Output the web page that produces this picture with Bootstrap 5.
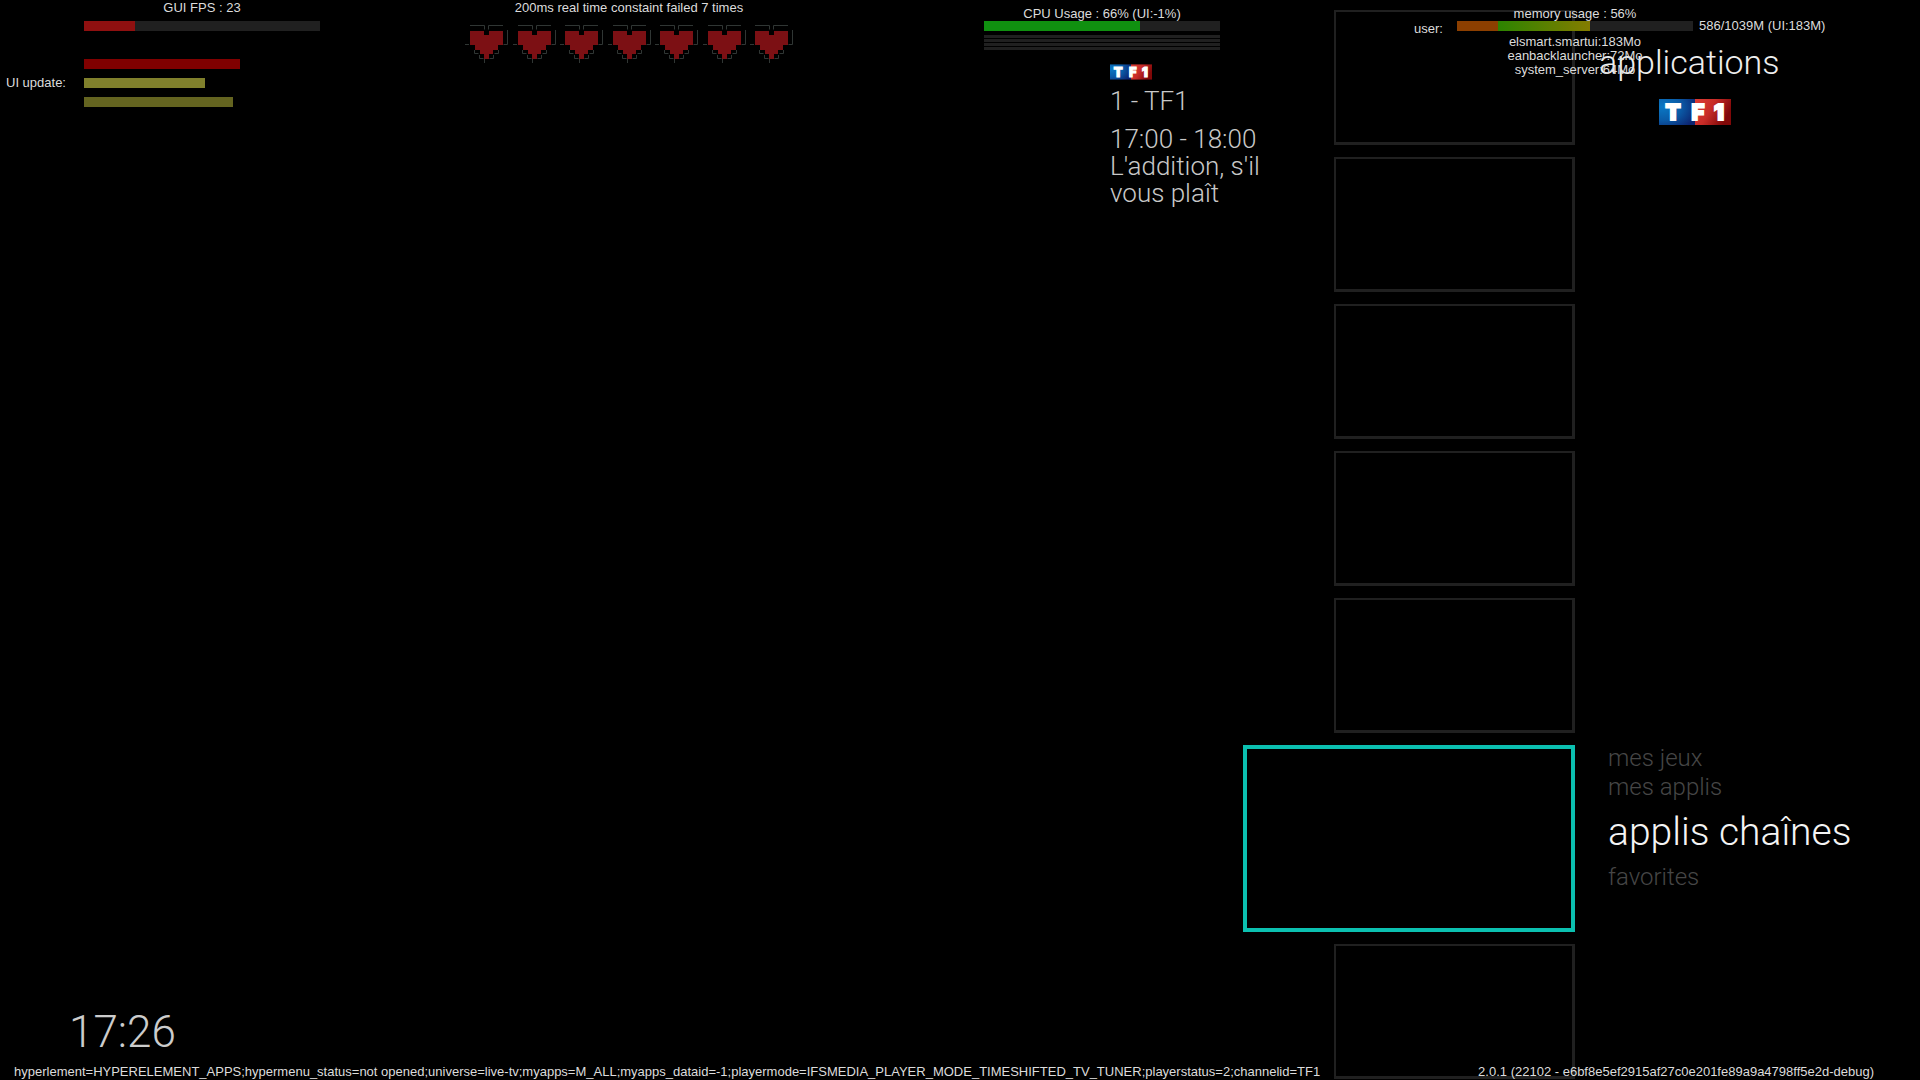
<!DOCTYPE html>
<html lang="fr">
<head>
<meta charset="utf-8">
<meta name="viewport" content="width=device-width, initial-scale=1">
<title>applications</title>
<link rel="stylesheet" href="https://cdn.jsdelivr.net/npm/bootstrap@5.3.0/dist/css/bootstrap.min.css">
<style>
  body { background: #000; color: #eee; font-family: Roboto, "Liberation Sans", sans-serif; font-weight: 300; }
  a { color: inherit; text-decoration: none; }
  .stage { display: grid; grid-template-columns: 1110fr 133px 332px 345fr; min-height: 100vh; overflow: hidden; }

  /* clock and channel */
  .clock { font-size: 44px; line-height: 48px; color: #ccc; padding: 0 0 24px 69px; }
  .channel { width: 160px; padding-top: 64px; color: #c8c8c8; font-size: 26px; line-height: 27px; }
  .channel-name { font-size: 26px; line-height: 27px; font-weight: 300; margin: 8px 0 11px; }

  /* vignettes */
  .tiles { padding: 10px 0 1px; gap: 12px; }
  .tile { width: 241px; height: 135px; border: solid #202020; border-width: 2px 3px 3px 2px; background: transparent; padding: 0; }
  .tile-on { width: 332px; height: 187px; border: 4px solid #0bc0b0; }

  /* right menu */
  .side { padding-top: 38px; }
  .side-title { font-size: 34px; line-height: 48px; font-weight: 300; margin: 0 0 13px 24px; }
  .side-logo { margin-left: 84px; }
  .side-menu { margin: 619px 0 0 33px; font-size: 24px; line-height: 29px; color: #464646; }
  .side-menu .current { font-size: 39px; line-height: 61px; color: #f4f4f4; }

  /* debug overlay */
  .hud { display: grid; grid-template-columns: 511fr 473fr 430fr 506fr; pointer-events: none; }
  .hud, .status { font-family: "Liberation Sans", sans-serif; font-weight: 400; font-size: 13px; line-height: 16px; color: #dcdcdc; }
  .hud-label { height: 21px; width: 236px; text-align: center; white-space: nowrap; }
  .hud-low { padding-top: 6px; }
  .meter { width: 236px; height: 10px; border-radius: 0; background: #202020; }
  .gauge { display: grid; grid-template-columns: 84px 236px; align-items: center; }
  .gauge-label { padding: 28px 0 0 6px; }
  .memory { display: grid; grid-template-columns: 43px 236px auto; align-content: start; }
  .memory-total { padding-left: 6px; margin-top: -3px; }
  .updates { padding-top: 28px; gap: 9px; }
  .updates div { height: 10px; }
  .c-red { background: #8f1010; }
  .c-dark { background: #800000; }
  .c-olive { background: #80802c; }
  .c-moss { background: #646420; }
  .c-green { background: #109010; }
  .c-rust { background: #8c3f00; }
  .c-mix { background: linear-gradient(90deg, #2c8400, #847c00); }
  .hearts { width: 328px; margin-left: -46px; padding-top: 4px; }
  .cores { width: 236px; gap: 1px; padding-top: 4px; }
  .cores div { height: 3px; background: #202020; }
  .procs { line-height: 14px; padding-top: 4px; text-align: center; white-space: nowrap; }
  .status { padding: 0 46px 0 14px; white-space: nowrap; pointer-events: none; }
</style>
</head>
<body>
<svg width="0" height="0" class="position-absolute" aria-hidden="true">
  <defs>
    <radialGradient id="gBlue" cx="0.1" cy="0.3" r="1"><stop offset="0" stop-color="#0a78c4"/><stop offset="0.5" stop-color="#0a5ca8"/><stop offset="1" stop-color="#0c2470"/></radialGradient>
    <linearGradient id="gRed" x1="0" y1="0" x2="1" y2="0.4"><stop offset="0" stop-color="#dc3c34"/><stop offset="0.5" stop-color="#c82c28"/><stop offset="1" stop-color="#800808"/></linearGradient>
    <symbol id="tf1" viewBox="0 0 72 26">
      <rect width="36" height="26" fill="url(#gBlue)"/><rect x="36" width="36" height="26" fill="url(#gRed)"/>
      <g fill="#fff" stroke="#fff" stroke-width="2" font-family="Inter, sans-serif" font-weight="900" font-size="22" text-anchor="middle"><text x="14" y="21">T</text><text x="39" y="21">F</text><text x="60" y="21">1</text></g>
    </symbol>
    <symbol id="heart" viewBox="0 0 43 38">
      <path fill="#7c1014" d="M5 6h14v4h5v-4h14v14h-5v5h-5v4h-4v5h-5v-5h-4v-4h-5v-5h-5z"/>
      <path fill="none" stroke="#303634" d="M5 .5h14.500v4M23.500 4.500v-4h14.500M0 19.500h4M42.500 5v14.500h-4M9.500 25v3.500h4M33.500 25v3.500h-4M14.500 30v3.500h4M28.500 30v3.500h-4M19.500 34v4"/>
    </symbol>
  </defs>
</svg>

<main class="stage">
  <time class="clock align-self-end">17:26</time>

  <section class="channel">
    <svg class="d-block" width="42" height="16" role="img" aria-label="TF1"><use href="#tf1"/></svg>
    <h2 class="channel-name">1 - TF1</h2>
    <div>17:00 - 18:00</div>
    <div>L'addition, s'il vous plaît</div>
  </section>

  <nav class="tiles d-flex flex-column align-items-end" aria-label="vignettes">
    <button class="tile" type="button"></button>
    <button class="tile" type="button"></button>
    <button class="tile" type="button"></button>
    <button class="tile" type="button"></button>
    <button class="tile" type="button"></button>
    <button class="tile tile-on" type="button"></button>
    <button class="tile" type="button"></button>
  </nav>

  <aside class="side">
    <h1 class="side-title">applications</h1>
    <svg class="side-logo d-block" width="72" height="26" role="img" aria-label="TF1"><use href="#tf1"/></svg>
    <nav class="side-menu d-flex flex-column align-items-start">
      <a href="#">mes jeux</a>
      <a href="#">mes applis</a>
      <a href="#" class="current" aria-current="page">applis chaînes</a>
      <a href="#">favorites</a>
    </nav>
  </aside>
</main>

<header class="hud position-absolute top-0 start-0 w-100">
  <section class="gauge align-self-start">
    <span></span>
    <div>
      <div class="hud-label">GUI FPS : 23</div>
      <div class="meter progress"><div class="progress-bar c-red" style="width:21.6%"></div></div>
    </div>
    <span class="gauge-label">UI update:</span>
    <div class="updates d-flex flex-column">
      <div class="c-dark" style="width:66.1%"></div>
      <div class="c-olive" style="width:51.3%"></div>
      <div class="c-moss" style="width:63.1%"></div>
    </div>
  </section>

  <section>
    <div class="hud-label">200ms real time constaint failed 7 times</div>
    <div class="hearts d-flex justify-content-between" role="img" aria-label="7">
      <svg width="43" height="38"><use href="#heart"/></svg>
      <svg width="43" height="38"><use href="#heart"/></svg>
      <svg width="43" height="38"><use href="#heart"/></svg>
      <svg width="43" height="38"><use href="#heart"/></svg>
      <svg width="43" height="38"><use href="#heart"/></svg>
      <svg width="43" height="38"><use href="#heart"/></svg>
      <svg width="43" height="38"><use href="#heart"/></svg>
    </div>
  </section>

  <section>
    <div class="hud-label hud-low">CPU Usage : 66% (UI:-1%)</div>
    <div class="meter progress"><div class="progress-bar c-green" style="width:66.1%"></div></div>
    <div class="cores d-flex flex-column"><div></div><div></div><div></div><div></div></div>
  </section>

  <section class="memory">
    <span></span><div class="hud-label hud-low">memory usage : 56%</div><span></span>
    <span>user:</span>
    <div>
      <div class="meter progress"><div class="progress-bar c-rust" style="width:17.4%"></div><div class="progress-bar c-mix" style="width:39%"></div></div>
      <div class="procs">elsmart.smartui:183Mo<br>eanbacklauncher:72Mo<br>system_server:64Mo</div>
    </div>
    <span class="memory-total">586/1039M (UI:183M)</span>
  </section>
</header>

<footer class="status position-absolute bottom-0 start-0 w-100 d-flex justify-content-between">
  <span>hyperlement=HYPERELEMENT_APPS;hypermenu_status=not opened;universe=live-tv;myapps=M_ALL;myapps_dataid=-1;playermode=IFSMEDIA_PLAYER_MODE_TIMESHIFTED_TV_TUNER;playerstatus=2;channelid=TF1</span>
  <span>2.0.1 (22102 - e6bf8e5ef2915af27c0e201fe89a9a4798ff5e2d-debug)</span>
</footer>
<script src="https://cdn.jsdelivr.net/npm/bootstrap@5.3.0/dist/js/bootstrap.bundle.min.js"></script>
</body>
</html>
